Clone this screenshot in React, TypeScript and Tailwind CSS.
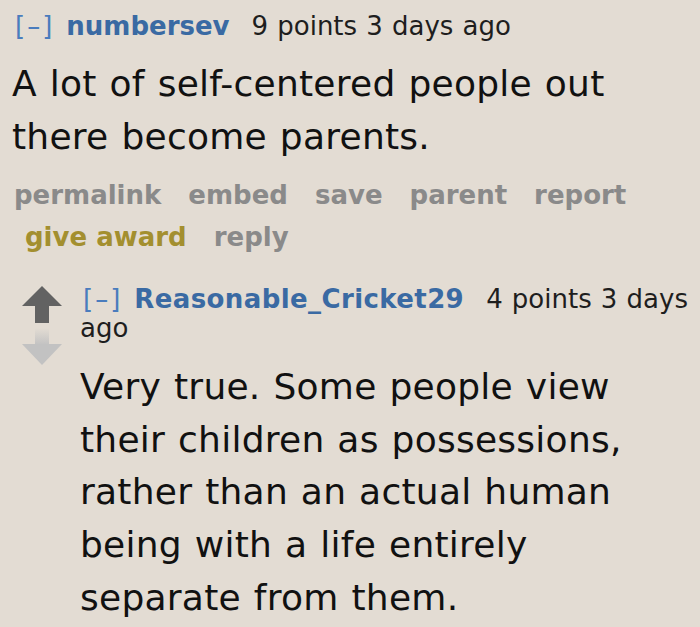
import React from "react";

interface CommentButton {
  label: string;
  award?: boolean;
}

const buttons: CommentButton[] = [
  { label: "permalink" },
  { label: "embed" },
  { label: "save" },
  { label: "parent" },
  { label: "report" },
  { label: "give award", award: true },
  { label: "reply" },
];

interface TaglineProps {
  author: string;
  score: string;
  time: string;
  nameClass?: string;
}

const Tagline = ({ author, score, time, nameClass = "" }: TaglineProps) => (
  <p className="text-[26px] leading-[28.5px] [word-spacing:0.9px]">
    <span className="ml-[3px] text-[#4a7cbd] [letter-spacing:2px]">[–]</span>
    <a className={`ml-[12px] font-bold text-[#3a6aa3] ${nameClass}`.trim()}>{author}</a>
    <span className="ml-[22px] text-[#1e1e1e]">
      {score} {time}
    </span>
  </p>
);

const VoteArrows = () => (
  <svg width="40" height="80" viewBox="0 0 40 80" className="mt-px shrink-0">
    <defs>
      <linearGradient id="downStem" x1="0" y1="0" x2="0" y2="1">
        <stop offset="0" stopColor="#e3dcd3" />
        <stop offset="1" stopColor="#c2c2c2" />
      </linearGradient>
    </defs>
    <polygon points="20,0 40,20 27,20 27,37 13,37 13,20 0,20" fill="#626262" />
    <rect x="13" y="42" width="14" height="17" fill="url(#downStem)" />
    <polygon points="0,58 40,58 20,79" fill="#c2c2c2" />
  </svg>
);

export default function App() {
  return (
    <div className="min-h-screen bg-[#e3dcd3] pl-[12px] pt-[12px] font-['DejaVu_Sans',Verdana,sans-serif] text-[#111]">
      <Tagline author="numbersev" score="9 points" time="3 days ago" />

      <div className="mt-[17.5px] text-[36px] leading-[52.5px] [word-spacing:1.2px] [letter-spacing:0.25px]">
        <p>A lot of self-centered people out there become parents.</p>
      </div>

      <ul className="mt-[11px] flex w-[680px] flex-wrap gap-x-[27px] pl-[2px] text-[26px] font-bold leading-[42px]">
        {buttons.map((b) => (
          <li
            key={b.label}
            className={b.award ? "ml-[11px] text-[#a38f2f]" : "text-[#8a8a8a]"}
          >
            {b.label}
          </li>
        ))}
      </ul>

      <div className="mt-[27px] flex">
        <div className="ml-[10px]">
          <VoteArrows />
        </div>
        <div className="ml-[18px] w-[610px]">
          <Tagline
            author="Reasonable_Cricket29"
            score="4 points"
            time="3 days ago"
            nameClass="[letter-spacing:0.4px]"
          />
          <div className="mt-[19px] w-[570px] text-[36px] leading-[52.7px] [word-spacing:1.2px] [letter-spacing:0.25px]">
            <p>
              Very true. Some people view their children as possessions, rather than an actual
              human being with a life entirely separate from them.
            </p>
          </div>
        </div>
      </div>
    </div>
  );
}
